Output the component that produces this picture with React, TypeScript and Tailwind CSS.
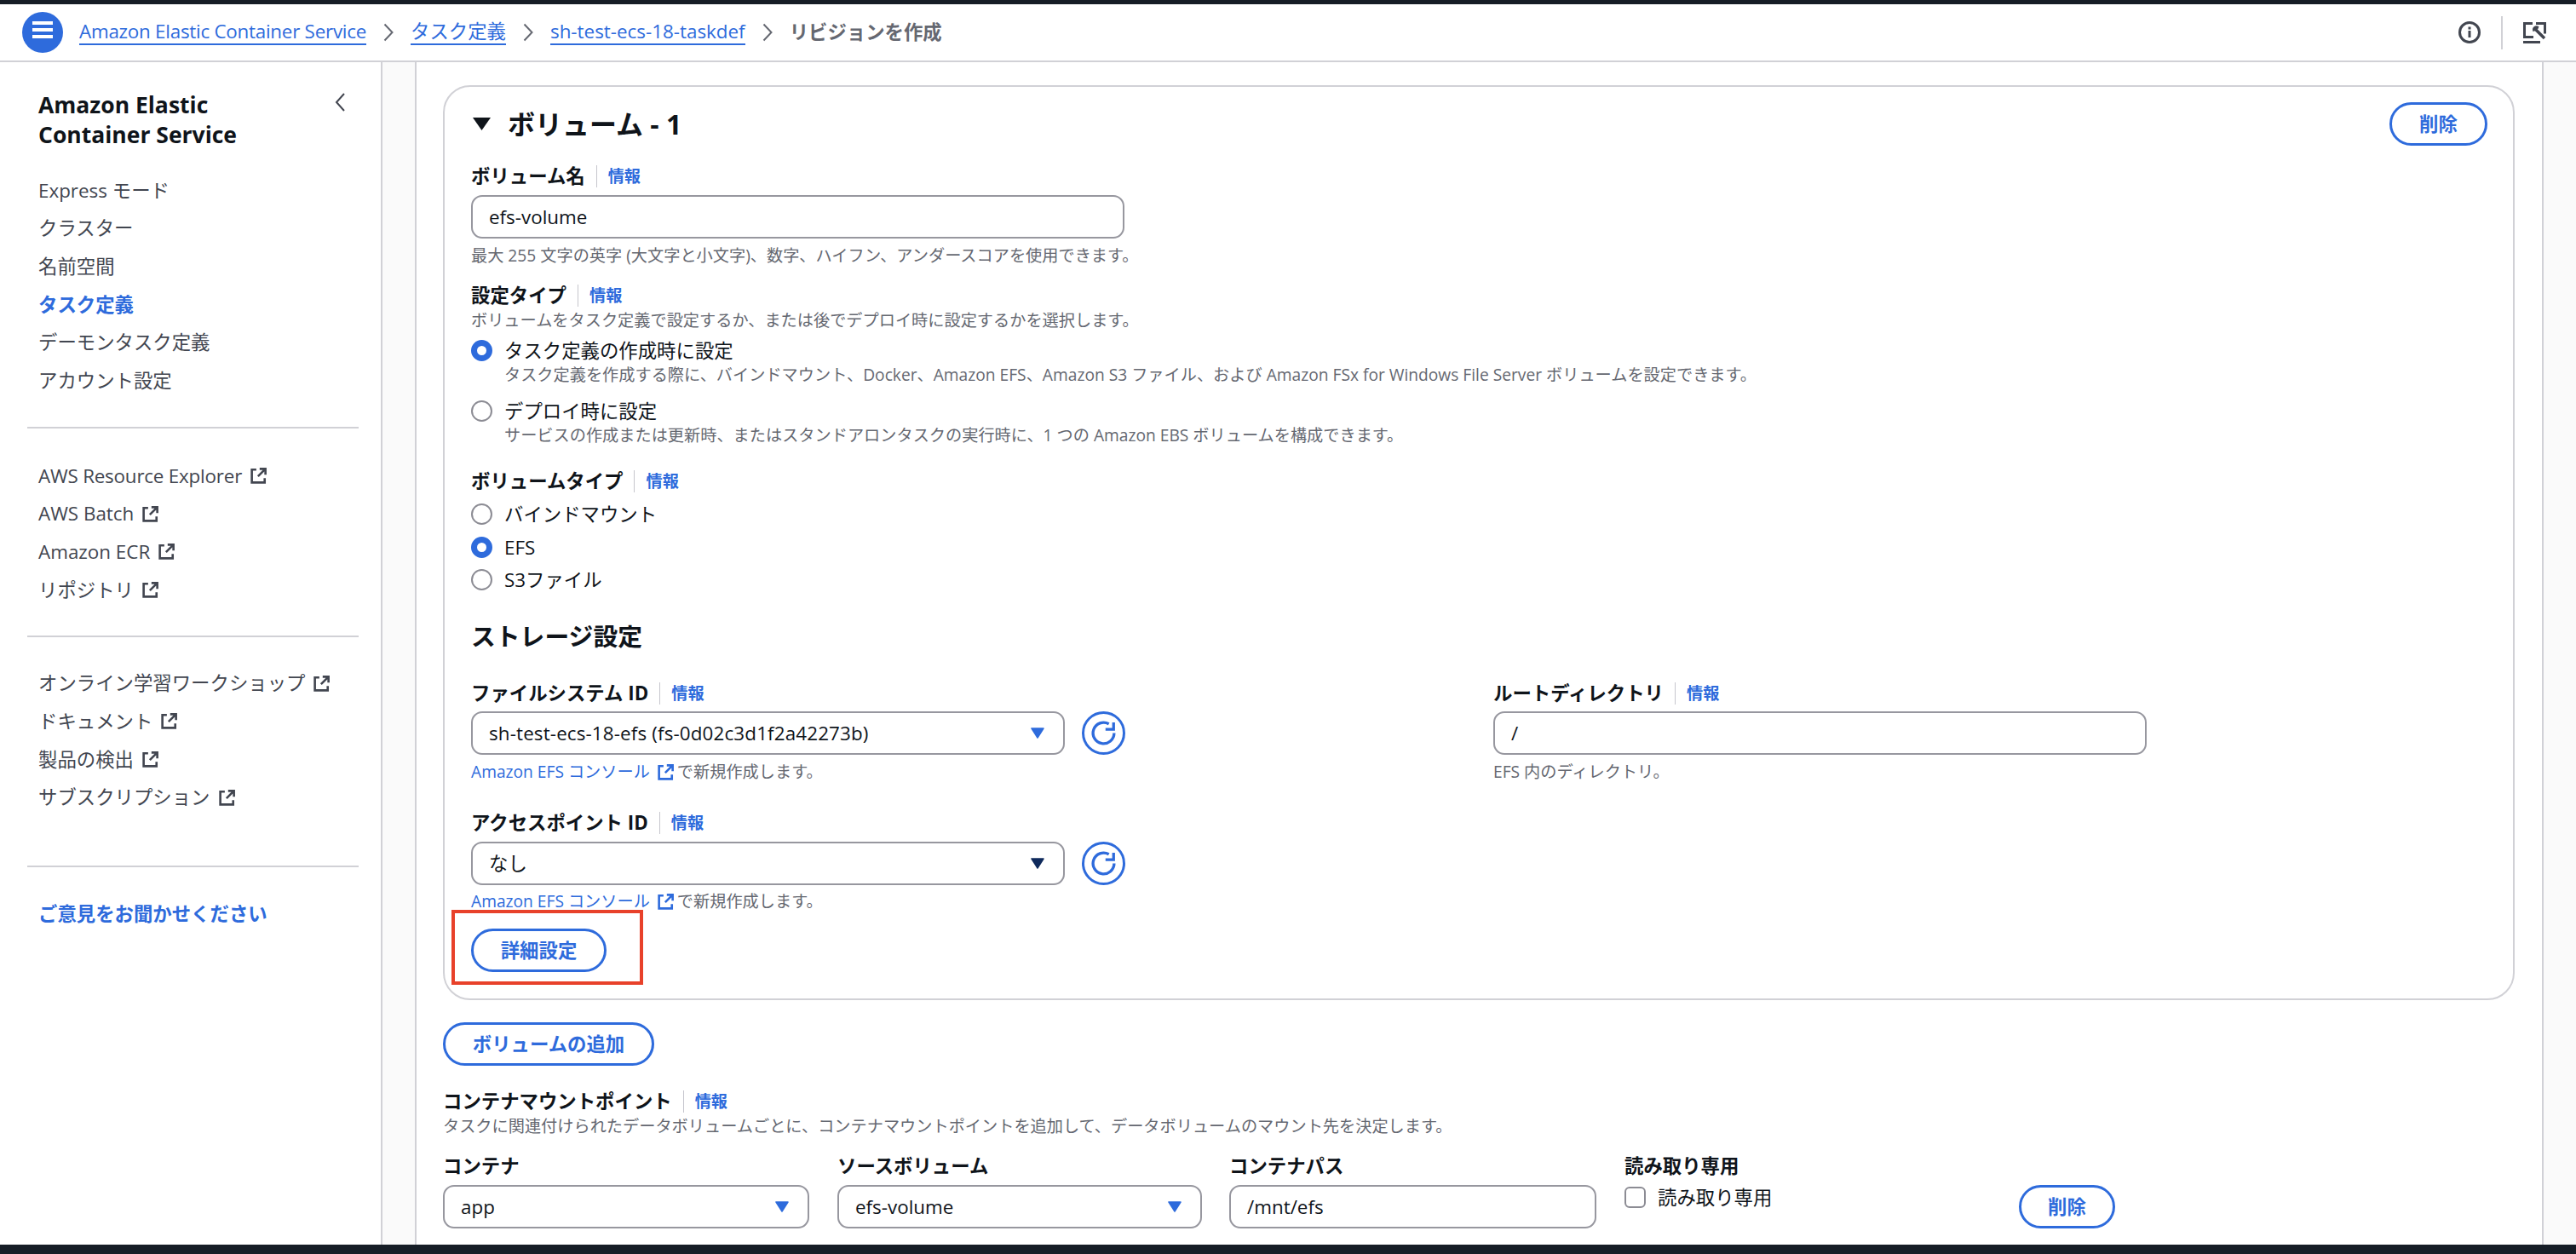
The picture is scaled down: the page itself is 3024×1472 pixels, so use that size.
import React from 'react';

const BLUE = 'text-[#2e6bdc]';

const ExternalIcon: React.FC<{ className?: string }> = ({ className = 'text-[#424650]' }) => (
  <svg viewBox="0 0 16 16" fill="none" stroke="currentColor" strokeWidth="2" className={`inline-block h-[21px] w-[21px] shrink-0 ${className}`}>
    <path d="M6 2.5H2V14h11.5v-4" />
    <path d="M9 1.8h5.2V7M14 2 7.5 8.5" />
  </svg>
);

const Caret: React.FC<{ dark?: boolean }> = ({ dark }) => (
  <svg viewBox="0 0 16 13" className={`h-[13px] w-[16px] ${dark ? 'text-[#0f2a5c]' : BLUE}`} fill="currentColor" stroke="currentColor" strokeWidth="1.5" strokeLinejoin="round">
    <path d="M1 1h14L8 12z" />
  </svg>
);

const RefreshButton: React.FC = () => (
  <button className={`flex h-[51px] w-[51px] shrink-0 items-center justify-center rounded-full border-[3px] border-[#2e6bdc] ${BLUE}`}>
    <svg viewBox="0 0 16 16" fill="none" stroke="currentColor" strokeWidth="1.6" className="h-[33px] w-[33px]">
      <path d="M14 8a6 6 0 1 1-3-5.2" />
      <path d="M13.7 1.9v4H9.1" />
    </svg>
  </button>
);

const Label: React.FC<{ text: string; className?: string }> = ({ text, className = '' }) => (
  <div className={`flex h-[26px] items-center ${className}`}>
    <span className="text-[22.4px] leading-[26px] font-bold text-[#0f141a]">{text}</span>
    <span className="ml-[13px] h-[26px] border-l border-[#c6c6cd]" />
    <a className={`ml-[13px] text-[19.2px] leading-[26px] font-semibold ${BLUE}`}>情報</a>
  </div>
);

const Hint: React.FC<{ text: string; className?: string }> = ({ text, className = '' }) => (
  <p className={`h-[26px] text-[19.2px] leading-[26px] text-[#656871] ${className}`}>{text}</p>
);

const Field: React.FC<{ value: string; caret?: 'blue' | 'dark'; className?: string }> = ({ value, caret, className = '' }) => (
  <div className={`flex h-[51px] items-center justify-between rounded-[13px] border-2 border-[#97979f] bg-white pr-[22px] pl-[19px] text-[22.4px] text-[#0f141a] ${className}`}>
    <span>{value}</span>
    {caret && <Caret dark={caret === 'dark'} />}
  </div>
);

const Radio: React.FC<{ checked?: boolean; label: string; className?: string }> = ({ checked, label, className = '' }) => (
  <div className={`flex h-[29px] items-center ${className}`}>
    <span
      className={
        checked
          ? 'h-[25px] w-[25px] shrink-0 rounded-full border-[7px] border-[#2e6bdc] bg-white'
          : 'h-[25px] w-[25px] shrink-0 rounded-full border-2 border-[#8c8c94] bg-white'
      }
    />
    <span className="ml-[14px] text-[22.4px] leading-[29px] text-[#0f141a]">{label}</span>
  </div>
);

const OutlineButton: React.FC<{ text: string; className?: string }> = ({ text, className = '' }) => (
  <button className={`flex h-[51px] items-center justify-center rounded-full border-[3px] border-[#2e6bdc] text-[22.4px] font-semibold ${BLUE} ${className}`}>
    {text}
  </button>
);

const ConsoleHelp: React.FC = () => (
  <div className="flex h-[26px] items-center text-[19.2px] leading-[26px]">
    <a className={BLUE}>Amazon EFS コンソール</a>
    <ExternalIcon className={`ml-[8px] ${BLUE}`} />
    <span className="ml-[3px] text-[#656871]">で新規作成します。</span>
  </div>
);

const NavItem: React.FC<{ text: string; active?: boolean; external?: boolean; className?: string }> = ({ text, active, external, className = '' }) => (
  <li className={`flex h-[44.7px] items-center text-[22.4px] ${active ? `font-bold ${BLUE}` : 'text-[#424650]'} ${className}`}>
    {text}
    {external && <ExternalIcon className="ml-[9px] text-[#424650]" />}
  </li>
);

const Crumb: React.FC<{ text: string; className?: string }> = ({ text, className = '' }) => (
  <a className={`border-b-2 border-[#2e6bdc] text-[22.4px] leading-[28px] ${BLUE} ${className}`}>{text}</a>
);

const CrumbArrow: React.FC = () => (
  <svg viewBox="0 0 12 22" fill="none" stroke="#656871" strokeWidth="2" className="mx-[20px] h-[22px] w-[12px] shrink-0">
    <path d="m1.5 1.5 9 9.5-9 9.5" />
  </svg>
);

const App: React.FC = () => {
  return (
    <div className="flex h-screen flex-col overflow-hidden bg-white font-['Open_Sans','Noto_Sans_CJK_JP',sans-serif]">
      <div className="h-[5px] shrink-0 bg-[#161d26]" />

      {/* Top breadcrumb bar */}
      <header className="flex h-[68px] shrink-0 items-center border-b-2 border-[#d1d1d6] pr-[35px] pl-[26px]">
        <button className="flex h-[48px] w-[48px] shrink-0 items-start justify-center rounded-full bg-[#2e6bdc] pt-[11px]">
          <svg viewBox="0 0 24 20" fill="white" className="h-[20px] w-[24px]">
            <rect y="0" width="24" height="4" />
            <rect y="8" width="24" height="4" />
            <rect y="16" width="24" height="4" />
          </svg>
        </button>
        <nav className="ml-[19px] flex items-center">
          <Crumb text="Amazon Elastic Container Service" className="tracking-[-0.25px]" />
          <CrumbArrow />
          <Crumb text="タスク定義" />
          <CrumbArrow />
          <Crumb text="sh-test-ecs-18-taskdef" />
          <CrumbArrow />
          <span className="text-[22.4px] font-semibold text-[#656871]">リビジョンを作成</span>
        </nav>
        <div className="ml-auto flex items-center">
          <svg viewBox="0 0 26 26" fill="none" stroke="#424650" strokeWidth="3" className="h-[26px] w-[26px]">
            <circle cx="13" cy="13" r="11.5" />
            <path d="M13 11v8M13 6.5v3" />
          </svg>
          <span className="mx-[24px] h-[39px] border-l-2 border-[#d1d1d6]" />
          <svg viewBox="0 0 27 25" fill="none" stroke="#424650" strokeWidth="3" className="h-[25px] w-[27px]">
            <path d="M11 1.5H1.5v16H12M15 1.5h10.5v12" />
            <path d="M0 23.5h20" />
            <path d="m15 9 10 10" strokeWidth="3.5" />
            <path d="M17.5 5.5a3.8 3.8 0 0 0-5.5 4.5l3-1 2-2z" fill="#424650" strokeWidth="1.5" />
          </svg>
        </div>
      </header>

      <div className="flex min-h-0 flex-1">
        {/* Side navigation */}
        <aside className="w-[449px] shrink-0 border-r-2 border-[#d1d1d6] pt-[33px] pr-[26px] pl-[45px]">
          <div className="flex items-start justify-between">
            <h2 className="text-[26.5px] leading-[35px] font-bold text-[#0f141a]">
              Amazon Elastic
              <br />
              Container Service
            </h2>
            <svg viewBox="0 0 14 24" fill="none" stroke="#424650" strokeWidth="2" className="mt-[2px] mr-[15px] h-[24px] w-[14px]">
              <path d="M12 2 3 12l9 10" />
            </svg>
          </div>
          <ul className="mt-[25px]">
            <NavItem text="Express モード" />
            <NavItem text="クラスター" />
            <NavItem text="名前空間" />
            <NavItem text="タスク定義" active />
            <NavItem text="デーモンタスク定義" />
            <NavItem text="アカウント設定" />
          </ul>
          <hr className="mt-[32px] -ml-[13px] border-t-2 border-[#d1d1d6]" />
          <ul className="mt-[33px]">
            <NavItem text="AWS Resource Explorer" external className="tracking-[-0.2px]" />
            <NavItem text="AWS Batch" external />
            <NavItem text="Amazon ECR" external />
            <NavItem text="リポジトリ" external />
          </ul>
          <hr className="mt-[31px] -ml-[13px] border-t-2 border-[#d1d1d6]" />
          <ul className="mt-[32px]">
            <NavItem text="オンライン学習ワークショップ" external />
            <NavItem text="ドキュメント" external />
            <NavItem text="製品の検出" external />
            <NavItem text="サブスクリプション" external />
          </ul>
          <hr className="mt-[57px] -ml-[13px] border-t-2 border-[#d1d1d6]" />
          <a className={`mt-[33px] block text-[22.4px] leading-[44px] font-bold ${BLUE}`}>ご意見をお聞かせください</a>
        </aside>

        <div className="w-[38px] shrink-0 bg-[#fafafa]" />

        {/* Form */}
        <main className="min-w-0 flex-1 border-x-2 border-[#d1d1d6] pt-[27px] pr-[32px] pl-[31px]">
          <section className="rounded-[32px] border-2 border-[#d1d1d6] pr-[30px] pb-[31px] pl-[31px]">
            <div className="mt-[18px] flex h-[51px] items-center justify-between">
              <h2 className="flex items-center text-[32px] font-bold text-[#0f141a]">
                <svg viewBox="0 0 21 15" fill="currentColor" className="mr-[20px] ml-[2px] h-[15px] w-[21px]">
                  <path d="M0 0h21L10.5 15z" />
                </svg>
                ボリューム - 1
              </h2>
              <OutlineButton text="削除" className="w-[115px]" />
            </div>

            <Label text="ボリューム名" className="mt-[23px]" />
            <Field value="efs-volume" className="mt-[9px] w-[767px]" />
            <Hint text="最大 255 文字の英字 (大文字と小文字)、数字、ハイフン、アンダースコアを使用できます。" className="mt-[7px]" />

            <Label text="設定タイプ" className="mt-[21px]" />
            <Hint text="ボリュームをタスク定義で設定するか、または後でデプロイ時に設定するかを選択します。" className="mt-[3px]" />
            <Radio checked label="タスク定義の作成時に設定" className="mt-[8px]" />
            <Hint
              text="タスク定義を作成する際に、バインドマウント、Docker、Amazon EFS、Amazon S3 ファイル、および Amazon FSx for Windows File Server ボリュームを設定できます。"
              className="mt-[1px] ml-[39px]"
            />
            <Radio label="デプロイ時に設定" className="mt-[15px]" />
            <Hint
              text="サービスの作成または更新時、またはスタンドアロンタスクの実行時に、1 つの Amazon EBS ボリュームを構成できます。"
              className="mt-[1px] ml-[39px]"
            />

            <Label text="ボリュームタイプ" className="mt-[28px]" />
            <Radio label="バインドマウント" className="mt-[11px]" />
            <Radio checked label="EFS" className="mt-[10px]" />
            <Radio label="S3ファイル" className="mt-[9px]" />

            <h3 className="mt-[32px] text-[28.8px] leading-[40px] font-bold text-[#0f141a]">ストレージ設定</h3>

            <div className="mt-[34px] flex">
              <div className="w-[1200px] shrink-0">
                <Label text="ファイルシステム ID" />
                <div className="mt-[8px] flex items-center gap-[20px]">
                  <Field value="sh-test-ecs-18-efs (fs-0d02c3d1f2a42273b)" caret="blue" className="w-[697px] tracking-[0.14px]" />
                  <RefreshButton />
                </div>
                <div className="mt-[7px]">
                  <ConsoleHelp />
                </div>
              </div>
              <div>
                <Label text="ルートディレクトリ" />
                <Field value="/" className="mt-[8px] w-[767px]" />
                <Hint text="EFS 内のディレクトリ。" className="mt-[7px]" />
              </div>
            </div>

            <Label text="アクセスポイント ID" className="mt-[34px]" />
            <div className="mt-[9px] flex items-center gap-[20px]">
              <Field value="なし" caret="dark" className="w-[697px]" />
              <RefreshButton />
            </div>
            <div className="mt-[6px]">
              <ConsoleHelp />
            </div>

            <div className="relative mt-[19px] w-[159px]">
              <OutlineButton text="詳細設定" className="w-[159px]" />
              <div className="absolute -top-[22px] -left-[23px] h-[88px] w-[225px] border-4 border-[#e8412a]" />
            </div>
          </section>

          <OutlineButton text="ボリュームの追加" className="mt-[26px] w-[248px]" />

          <Label text="コンテナマウントポイント" className="mt-[29px]" />
          <Hint text="タスクに関連付けられたデータボリュームごとに、コンテナマウントポイントを追加して、データボリュームのマウント先を決定します。" className="mt-[3px]" />

          <div className="mt-[21px] flex items-start">
            <div className="w-[430px]">
              <p className="h-[26px] text-[22.4px] leading-[26px] font-bold text-[#0f141a]">コンテナ</p>
              <Field value="app" caret="blue" className="mt-[9px]" />
            </div>
            <div className="ml-[33px] w-[428px]">
              <p className="h-[26px] text-[22.4px] leading-[26px] font-bold text-[#0f141a]">ソースボリューム</p>
              <Field value="efs-volume" caret="blue" className="mt-[9px]" />
            </div>
            <div className="ml-[32px] w-[431px]">
              <p className="h-[26px] text-[22.4px] leading-[26px] font-bold text-[#0f141a]">コンテナパス</p>
              <Field value="/mnt/efs" className="mt-[9px]" />
            </div>
            <div className="ml-[33px] w-[463px]">
              <p className="h-[26px] text-[22.4px] leading-[26px] font-bold text-[#0f141a]">読み取り専用</p>
              <div className="mt-[11px] flex items-center">
                <span className="h-[25px] w-[25px] rounded-[6px] border-2 border-[#8c8c94]" />
                <span className="ml-[14px] text-[22.4px] leading-[25px] text-[#0f141a]">読み取り専用</span>
              </div>
            </div>
            <OutlineButton text="削除" className="mt-[35px] w-[113px]" />
          </div>
        </main>

        <div className="w-[38px] shrink-0 bg-[#fafafa]" />
      </div>

      <div className="h-[11px] shrink-0 bg-[#161d26]" />
    </div>
  );
};

export default App;
